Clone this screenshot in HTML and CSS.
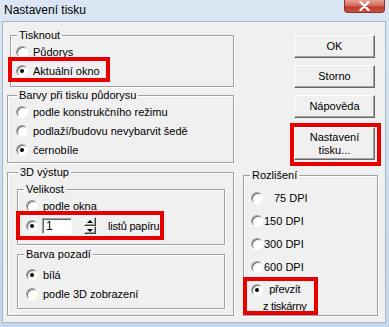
FILE: index.html
```html
<!DOCTYPE html>
<html lang="cs">
<head>
    <meta charset="UTF-8">
    <meta name="viewport" content="width=device-width, initial-scale=1.0">
    <title>Nastavení tisku</title>
    <link rel="stylesheet" href="styles.css">
</head>
<body>
    <div class="window">
        <div class="titlebar">
            <span class="title">Nastavení tisku</span>
            <span class="close">
                <svg width="13" height="10" viewBox="0 0 13 10">
                    <path d="M2.5 1 L10.5 9 M10.5 1 L2.5 9" stroke="#fff" stroke-width="2.4" stroke-linecap="round"></path>
                </svg>
            </span>
        </div>

        <div class="client">
            <div class="left">
                <div class="group tisk">
                    <div class="legend">Tisknout</div>
                    <label class="radio"><span class="dot"></span>Půdorys</label>
                    <label class="radio"><span class="dot on"></span>Aktuální okno</label>
                </div>

                <div class="group barvy">
                    <div class="legend">Barvy při tisku půdorysu</div>
                    <label class="radio"><span class="dot"></span>podle konstrukčního režimu</label>
                    <label class="radio"><span class="dot"></span>podlaží/budovu nevybarvit šedě</label>
                    <label class="radio"><span class="dot on"></span>černobíle</label>
                </div>

                <div class="group vystup">
                    <div class="legend">3D výstup</div>
                    <div class="group inner velikost">
                        <div class="legend">Velikost</div>
                        <label class="radio"><span class="dot"></span>podle okna</label>
                        <div class="radio pages">
                            <span class="dot on"></span>
                            <span class="edit">1</span>
                            <span class="spin"><span class="up"></span><span class="down"></span></span>
                            <span class="unit">listů papíru</span>
                        </div>
                    </div>
                    <div class="group inner pozadi">
                        <div class="legend">Barva pozadí</div>
                        <label class="radio"><span class="dot on"></span>bílá</label>
                        <label class="radio"><span class="dot"></span>podle 3D zobrazení</label>
                    </div>
                </div>
            </div>

            <div class="right">
                <button class="btn">OK</button>
                <button class="btn">Storno</button>
                <button class="btn">Nápověda</button>
                <button class="btn tall">Nastavení<br>tisku...</button>

                <div class="group res">
                    <div class="legend">Rozlišení</div>
                    <label class="radio"><span class="dot"></span><span class="pad">75 DPI</span></label>
                    <label class="radio"><span class="dot"></span>150 DPI</label>
                    <label class="radio"><span class="dot"></span>300 DPI</label>
                    <label class="radio"><span class="dot"></span>600 DPI</label>
                    <label class="radio multi"><span class="dot on"></span><span class="lines">převzít<br>z tiskárny</span></label>
                </div>
            </div>
        </div>

        <!-- red annotation frames -->
        <div class="mark mark-okno"></div>
        <div class="mark mark-listy"></div>
        <div class="mark mark-nastaveni"></div>
        <div class="mark mark-prevzit"></div>
    </div>
</body>
</html>
```

FILE: styles.css
```css
* {
    box-sizing: border-box;
}

body {
    margin: 0;
    font-family: "Liberation Sans", Arial, sans-serif;
    font-size: 11px;
    color: #000;
}

.window {
    position: relative;
    width: 389px;
    height: 327px;
    display: flex;
    flex-direction: column;
    padding: 0 3px 4px 2px;
    background: linear-gradient(#dae6f4, #c3d6ec);
}

.titlebar {
    height: 21px;
    margin: 0 -3px 0 -2px;
    display: flex;
    align-items: flex-start;
}

.title {
    padding-left: 4px;
    font-size: 12px;
    line-height: 21px;
    color: #000;
}

.close {
    margin-left: auto;
    margin-right: 4px;
    width: 41px;
    height: 13px;
    display: flex;
    justify-content: center;
    align-items: center;
    background: linear-gradient(#e6a396, #d46b5c 45%, #c03a2b 60%, #cc5544);
    border: 1px solid #8a3328;
    border-top: none;
    border-radius: 0 0 4px 4px;
}

.client {
    flex: 1;
    display: flex;
    gap: 9px;
    padding: 13px 7px 0 4px;
    background: #f0f0f0;
    border: 1px solid #a7b7ca;
}

.left {
    width: 227px;
    display: flex;
    flex-direction: column;
}

.right {
    width: 135px;
    display: flex;
    flex-direction: column;
    align-items: flex-end;
}

/* group boxes */
.group {
    padding: 0 0 0 8px;
    border: 1px solid #a0a0a0;
    box-shadow: 1px 1px 0 #fff, inset 1px 1px 0 #fff;
}

.legend {
    width: fit-content;
    margin: -7px 0 0 1px;
    padding: 0 2px;
    line-height: 13px;
    background: #f0f0f0;
}

.tisk {
    margin-left: 3px;
    padding: 0 0 6px 5px;
}

.barvy {
    margin-top: 8px;
    padding-bottom: 3px;
}

.vystup {
    margin-top: 9px;
    padding: 0 8px 6px 9px;
}

.inner .legend {
    margin-left: -2px;
}

.velikost {
    margin-top: 10px;
    padding-bottom: 8px;
}

.pozadi {
    margin-top: 9px;
    padding-top: 4px;
    padding-bottom: 5px;
}

.pozadi .legend {
    margin-top: -11px;
    margin-bottom: 4px;
}

.res {
    align-self: stretch;
    margin-top: 8px;
    padding: 4px 0 0 7px;
}

.res .legend {
    margin: -11px 0 4px -1px;
}

/* radio buttons */
.radio {
    display: flex;
    align-items: center;
    height: 19px;
    white-space: nowrap;
}

.dot {
    position: relative;
    flex: none;
    width: 12px;
    height: 12px;
    margin-right: 5px;
    border-radius: 50%;
    background: #fff;
    border: 1px solid;
    border-color: #a0a0a0 #fff #fff #a0a0a0;
    box-shadow: inset 1px 1px 0 #707070;
}

.dot.on::after {
    content: "";
    position: absolute;
    left: 3px;
    top: 3px;
    width: 4px;
    height: 4px;
    border-radius: 50%;
    background: #000;
}

.res .radio {
    height: 23px;
}

.res .dot {
    margin-right: 1px;
}

.pad {
    padding-left: 10px;
}

.res .multi {
    height: auto;
    align-items: flex-start;
    margin-top: 3px;
}

.multi .dot {
    margin-top: 3px;
    margin-right: 0;
}

.lines {
    line-height: 17px;
    text-align: center;
    letter-spacing: -0.3px;
}

/* pages row */
.pages {
    height: 21px;
}

.edit {
    width: 30px;
    height: 16px;
    margin-left: -1px;
    padding-left: 3px;
    line-height: 14px;
    font-size: 12px;
    background: #fff;
    border: 1px solid;
    border-color: #a0a0a0 #fff #fff #a0a0a0;
    box-shadow: inset 1px 1px 0 #696969;
}

.spin {
    display: flex;
    flex-direction: column;
    width: 12px;
    height: 17px;
    margin-left: 12px;
}

.spin span {
    position: relative;
    flex: 1;
    background: #f0f0f0;
    border: 1px solid;
    border-color: #fff #404040 #404040 #fff;
    box-shadow: inset -1px -1px 0 #a0a0a0;
}

.spin span::after {
    content: "";
    position: absolute;
    left: 2px;
    top: 2px;
    border-left: 3px solid transparent;
    border-right: 3px solid transparent;
}

.spin .up::after {
    border-bottom: 3px solid #000;
}

.spin .down::after {
    border-top: 3px solid #000;
}

.unit {
    margin-left: 12px;
    letter-spacing: -0.2px;
}

/* push buttons */
.btn {
    width: 81px;
    height: 23px;
    margin: 0 3px 7px 0;
    padding: 0;
    font-family: inherit;
    font-size: 11px;
    line-height: 13px;
    color: #000;
    background: #f0f0f0;
    border: 1px solid;
    border-color: #fff #696969 #696969 #fff;
    box-shadow: inset -1px -1px 0 #a0a0a0;
}

.btn.tall {
    height: 33px;
    margin-top: 2px;
}

/* red annotation frames over the dialog */
.mark {
    position: absolute;
    border: 4px solid #e80000;
}

.mark-okno {
    left: 8px;
    top: 57px;
    width: 102px;
    height: 25px;
}

.mark-listy {
    left: 16px;
    top: 211px;
    width: 148px;
    height: 29px;
}

.mark-nastaveni {
    left: 290px;
    top: 123px;
    width: 91px;
    height: 43px;
}

.mark-prevzit {
    left: 243px;
    top: 277px;
    width: 75px;
    height: 38px;
}
```
